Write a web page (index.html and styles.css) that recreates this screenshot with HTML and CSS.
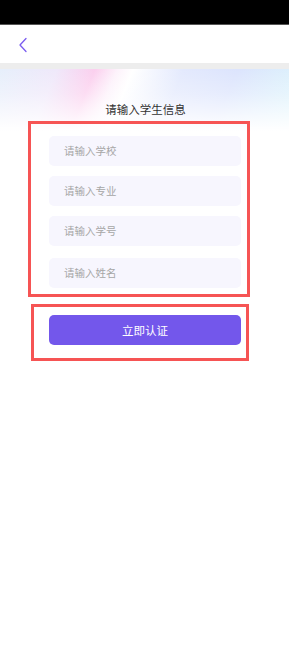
FILE: index.html
```html
<!DOCTYPE html>
<html lang="zh">
<head>
<meta charset="utf-8">
<link rel="stylesheet" href="styles.css">
</head>
<body>
<div class="status"></div>
<div class="header">
  <svg class="back" width="10" height="16" viewBox="0 0 10 16"><path d="M8 1.5 L2 8 L8 14.5" fill="none" stroke="#7a5cf0" stroke-width="1.3" stroke-linecap="round" stroke-linejoin="round"/></svg>
</div>
<div class="band"></div>
<div class="content">
  <div class="title">请输入学生信息</div>
  <div class="box box1">
    <div class="field">请输入学校</div>
    <div class="field">请输入专业</div>
    <div class="field">请输入学号</div>
    <div class="field last">请输入姓名</div>
  </div>
  <div class="box box2">
    <div class="btn">立即认证</div>
  </div>
</div>
</body>
</html>
```
FILE: styles.css
```css
html, body { margin: 0; padding: 0; background: #fff; }
body { width: 289px; height: 649px; overflow: hidden; font-family: "Noto Sans CJK SC", "Noto Sans", sans-serif; }
.status { height: 24px; background: #000; border-bottom: 1px solid #555; }
.header { height: 38px; background: #fff; display: flex; align-items: center; padding-left: 18px; }
.back { display: block; margin-top: 1px; }
.band { height: 6px; background: #ededed; }
.content {
  padding-top: 32px;
  background:
    linear-gradient(to bottom, rgba(255,255,255,0) 0, rgba(255,255,255,0.3) 25px, #fff 62px),
    linear-gradient(112deg, #e6effb 0%, #efe8fa 18%, #fbcfee 30%, #fdf2fb 37%, #ffffff 42%, #e3e9fd 58%, #dce4fd 75%, #ddf5fb 100%);
  background-repeat: no-repeat;
  background-size: 100% 70px, 100% 70px;
  min-height: 560px;
}
.title { text-align: center; font-size: 11.5px; line-height: 16px; color: #333; height: 16px; padding-left: 2px; }
.box { border: 3px solid #f65454; box-sizing: border-box; }
.box1 { margin: 4px 0 0 28px; width: 222px; height: 176px; padding: 12px 0 0 18px; }
.field { width: 192px; height: 30px; border-radius: 5px; background: #f7f6fe; color: #a6a6a6; font-size: 10.5px; line-height: 30px; padding-left: 15px; box-sizing: border-box; margin-bottom: 10px; }
.field:nth-child(3) { margin-bottom: 12px; }
.box2 { margin: 7px 0 0 31px; width: 218px; height: 57px; padding: 8px 0 0 15px; }
.btn { width: 192px; height: 30px; border-radius: 5px; background: #7357eb; color: #fff; font-size: 11.5px; line-height: 30px; text-align: center; }
```
